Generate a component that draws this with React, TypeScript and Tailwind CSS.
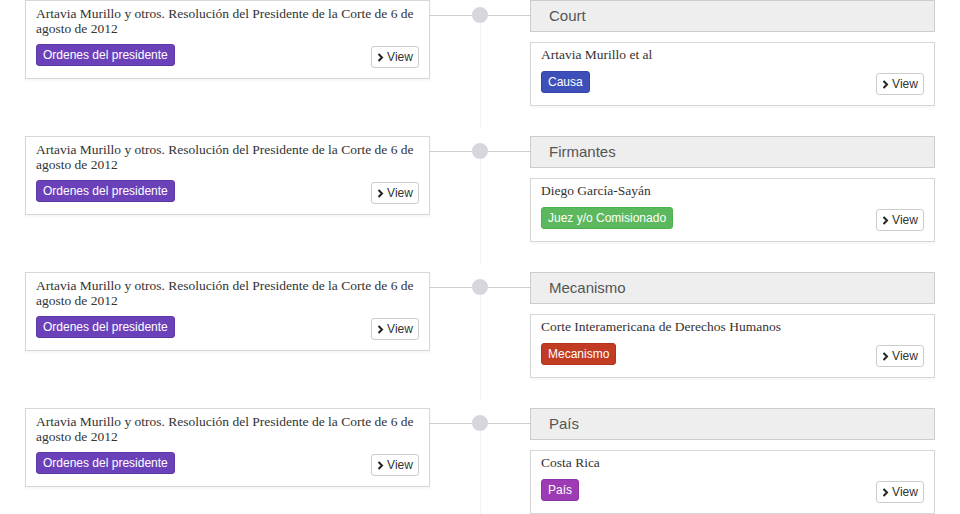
import React from "react";

const Chevron = () => (
  <svg width="7" height="9" viewBox="0 0 7 9" className="mr-[3px]">
    <path d="M1.5 1 L5 4.5 L1.5 8" stroke="#222" strokeWidth="2" fill="none" strokeLinejoin="miter" />
  </svg>
);

const ViewBtn = () => (
  <button className="flex items-center h-[22px] w-[48px] justify-center border border-[#cccccc] rounded-[3px] bg-white text-[12px] text-[#333] font-['Liberation_Sans',Arial,sans-serif]">
    <Chevron />
    View
  </button>
);

const Badge = ({ text, color }: { text: string; color: string }) => (
  <div
    className={`flex items-center h-[22px] px-[6px] mb-[2px] rounded-[3px] text-white text-[12px] leading-[14px] font-['Liberation_Sans',Arial,sans-serif] border ${color}`}
  >
    {text}
  </div>
);

const rows = [
  { header: "Court", name: "Artavia Murillo et al", badge: "Causa", color: "bg-[#3d4fb8] border-[#3546a8]" },
  { header: "Firmantes", name: "Diego García-Sayán", badge: "Juez y/o Comisionado", color: "bg-[#5cb85c] border-[#4cae4c]" },
  { header: "Mecanismo", name: "Corte Interamericana de Derechos Humanos", badge: "Mecanismo", color: "bg-[#c23c24] border-[#b0341e]" },
  { header: "País", name: "Costa Rica", badge: "País", color: "bg-[#9c3bb3] border-[#8e33a4]" },
];

export default function App() {
  return (
    <div className="w-[960px] h-[514px] overflow-hidden bg-white font-['Liberation_Serif',serif] text-[#333]">
      <div className="flex flex-col gap-[30px]">
        {rows.map((r, i) => (
          <div key={i} className="flex h-[106px] shrink-0">
            <div className="ml-[25px] w-[405px]">
              <div className="border border-[#d6d6d6] bg-white px-[10px] pt-[5px] pb-[10px] shadow-[0_2px_3px_rgba(0,0,0,0.04)]">
                <div className="text-[13.5px] leading-[15px]">
                  Artavia Murillo y otros. Resolución del Presidente de la Corte de 6 de agosto de 2012
                </div>
                <div className="flex justify-between items-end mt-[8px]">
                  <Badge text="Ordenes del presidente" color="bg-[#6a41b9] border-[#5f38a8]" />
                  <ViewBtn />
                </div>
              </div>
            </div>
            <div className="w-[100px] relative">
              <div className="absolute left-0 top-[15px] w-[42px] h-px bg-[#cfcfcf]" />
              <div className="absolute left-[58px] top-[15px] w-[42px] h-px bg-[#cfcfcf]" />
              <div className="absolute left-[42px] top-[7px] w-[16px] h-[16px] rounded-full bg-[#d6d6de]" />
              <div className="absolute left-[49.5px] top-[23px] w-px h-[106px] bg-[#f3f3f3]" />
            </div>
            <div className="w-[405px] flex flex-col">
              <div className="h-[32px] shrink-0 border border-[#cccccc] bg-[#eeeeee] flex items-center pl-[18px] text-[15px] text-[#555] font-['Liberation_Sans',Arial,sans-serif]">
                {r.header}
              </div>
              <div className="mt-[10px] shrink-0 border border-[#d6d6d6] bg-white px-[10px] pt-[4px] pb-[10px] shadow-[0_2px_3px_rgba(0,0,0,0.04)]">
                <div className="text-[13.5px] leading-[15px]">{r.name}</div>
                <div className="flex justify-between items-end mt-[9px]">
                  <Badge text={r.badge} color={r.color} />
                  <ViewBtn />
                </div>
              </div>
            </div>
          </div>
        ))}
      </div>
    </div>
  );
}
